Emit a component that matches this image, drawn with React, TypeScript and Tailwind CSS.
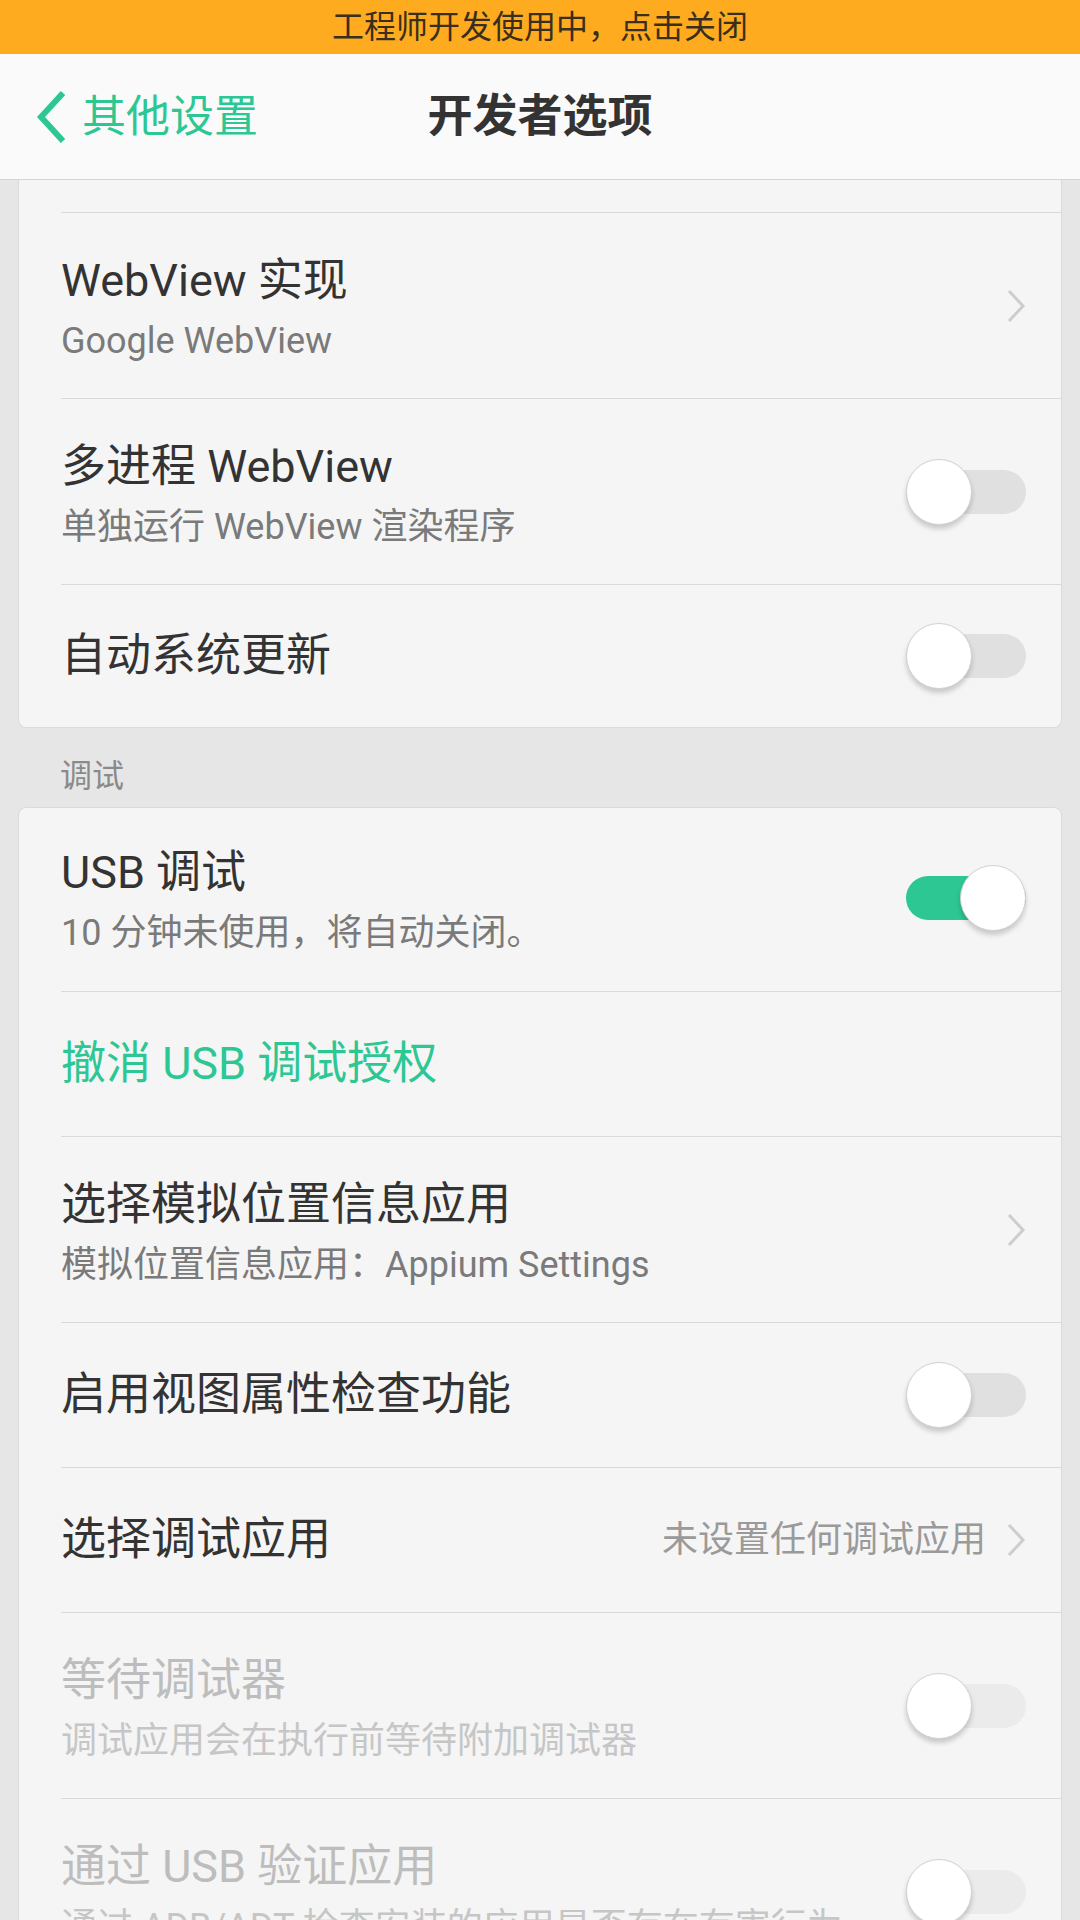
import React from 'react';

interface ToggleProps {
  on?: boolean;
  disabled?: boolean;
}

const Toggle: React.FC<ToggleProps> = ({ on = false, disabled = false }) => {
  const track = on ? 'bg-[#2dc793]' : disabled ? 'bg-[#ebebeb]' : 'bg-[#e0e0e0]';
  return (
    <div className="relative w-[120px] h-[66px] shrink-0 flex items-center">
      <div className={`w-[120px] h-[44px] rounded-full ${track}`} />
      <div
        className={`absolute top-0 ${on ? 'right-0' : 'left-0'} w-[66px] h-[66px] rounded-full bg-white border border-[#d2d2d2] shadow-[0_4px_5px_rgba(0,0,0,0.18)]`}
      />
    </div>
  );
};

const Chevron: React.FC = () => (
  <svg width="20" height="34" viewBox="0 0 20 34" className="shrink-0">
    <path d="M3 2 L17 17 L3 32" fill="none" stroke="#cdcdcd" strokeWidth="3" />
  </svg>
);

interface RowProps {
  title: string;
  subtitle?: string;
  first?: boolean;
  disabled?: boolean;
  green?: boolean;
  right?: React.ReactNode;
  tall?: boolean;
  short?: boolean;
}

const Row: React.FC<RowProps> = ({ title, subtitle, first, disabled, green, right, tall, short }) => {
  const titleColor = green ? 'text-[#2dc793]' : disabled ? 'text-[#bdbdbd]' : 'text-[#333333]';
  const subColor = disabled ? 'text-[#c6c6c6]' : 'text-[#7a7a7a]';
  const height = tall ? 'h-[186px]' : short ? 'h-[143px]' : 'h-[145px]';
  return (
    <div className="pl-[42px]">
      <div
        className={`flex items-center justify-between pr-[35px] ${first ? '' : 'border-t border-[#d9d9d9]'} ${height}`}
      >
        {subtitle ? (
          <div className="flex flex-col self-start pt-[40px]">
            <span className={`text-[45px] leading-[56px] ${titleColor}`}>{title}</span>
            <span className={`mt-[10px] text-[36px] leading-[44px] whitespace-nowrap ${subColor}`}>{subtitle}</span>
          </div>
        ) : (
          <span className={`text-[45px] leading-[56px] ${titleColor}`}>{title}</span>
        )}
        {right}
      </div>
    </div>
  );
};

export default function App() {
  return (
    <div className="w-[1080px] h-[1920px] overflow-hidden bg-[#e6e6e6] font-[Roboto,'Noto_Sans_CJK_SC',sans-serif] flex flex-col">
      <div className="h-[54px] shrink-0 bg-[#ffab1f] flex items-center justify-center">
        <span className="text-[32px] leading-[40px] text-[#3a2f1c]">工程师开发使用中，点击关闭</span>
      </div>

      <div className="relative h-[126px] shrink-0 bg-[#fafafa] border-b border-[#d4d4d4] flex items-center justify-center">
        <div className="absolute left-[37px] top-0 h-full flex items-center gap-[15px]">
          <svg width="30" height="54" viewBox="0 0 30 54">
            <path d="M26 3 L4 27 L26 51" fill="none" stroke="#2dc793" strokeWidth="6" />
          </svg>
          <span className="text-[44px] leading-[56px] text-[#2dc793]">其他设置</span>
        </div>
        <span className="text-[45px] leading-[56px] font-bold text-[#333333]">开发者选项</span>
      </div>

      <div className="px-[18px] flex flex-col">
        <div className="bg-[#f5f5f5] border-x border-b border-[#dadada] rounded-b-[8px]">
          <div className="h-[32px]" />
          <Row title="WebView 实现" subtitle="Google WebView" tall right={<Chevron />} />
          <Row title="多进程 WebView" subtitle="单独运行 WebView 渲染程序" tall right={<Toggle />} />
          <Row title="自动系统更新" short right={<Toggle />} />
        </div>

        <div className="h-[79px] pt-[32px] pl-[42px]">
          <span className="block text-[32px] leading-[32px] text-[#8a8a8a]">调试</span>
        </div>

        <div className="bg-[#f5f5f5] border border-[#dadada] rounded-[8px]">
          <div className="-mt-[3px]">
            <Row title="USB 调试" subtitle="10 分钟未使用，将自动关闭。" first tall right={<Toggle on />} />
          </div>
          <Row title="撤消 USB 调试授权" green />
          <Row title="选择模拟位置信息应用" subtitle="模拟位置信息应用：Appium Settings" tall right={<Chevron />} />
          <Row title="启用视图属性检查功能" right={<Toggle />} />
          <Row
            title="选择调试应用"
            right={
              <div className="flex items-center gap-[20px]">
                <span className="text-[36px] leading-[44px] text-[#9a9a9a]">未设置任何调试应用</span>
                <Chevron />
              </div>
            }
          />
          <Row title="等待调试器" subtitle="调试应用会在执行前等待附加调试器" disabled tall right={<Toggle disabled />} />
          <Row
            title="通过 USB 验证应用"
            subtitle="通过 ADB/ADT 检查安装的应用是否存在有害行为"
            disabled
            tall
            right={<Toggle disabled />}
          />
        </div>
      </div>
    </div>
  );
}
